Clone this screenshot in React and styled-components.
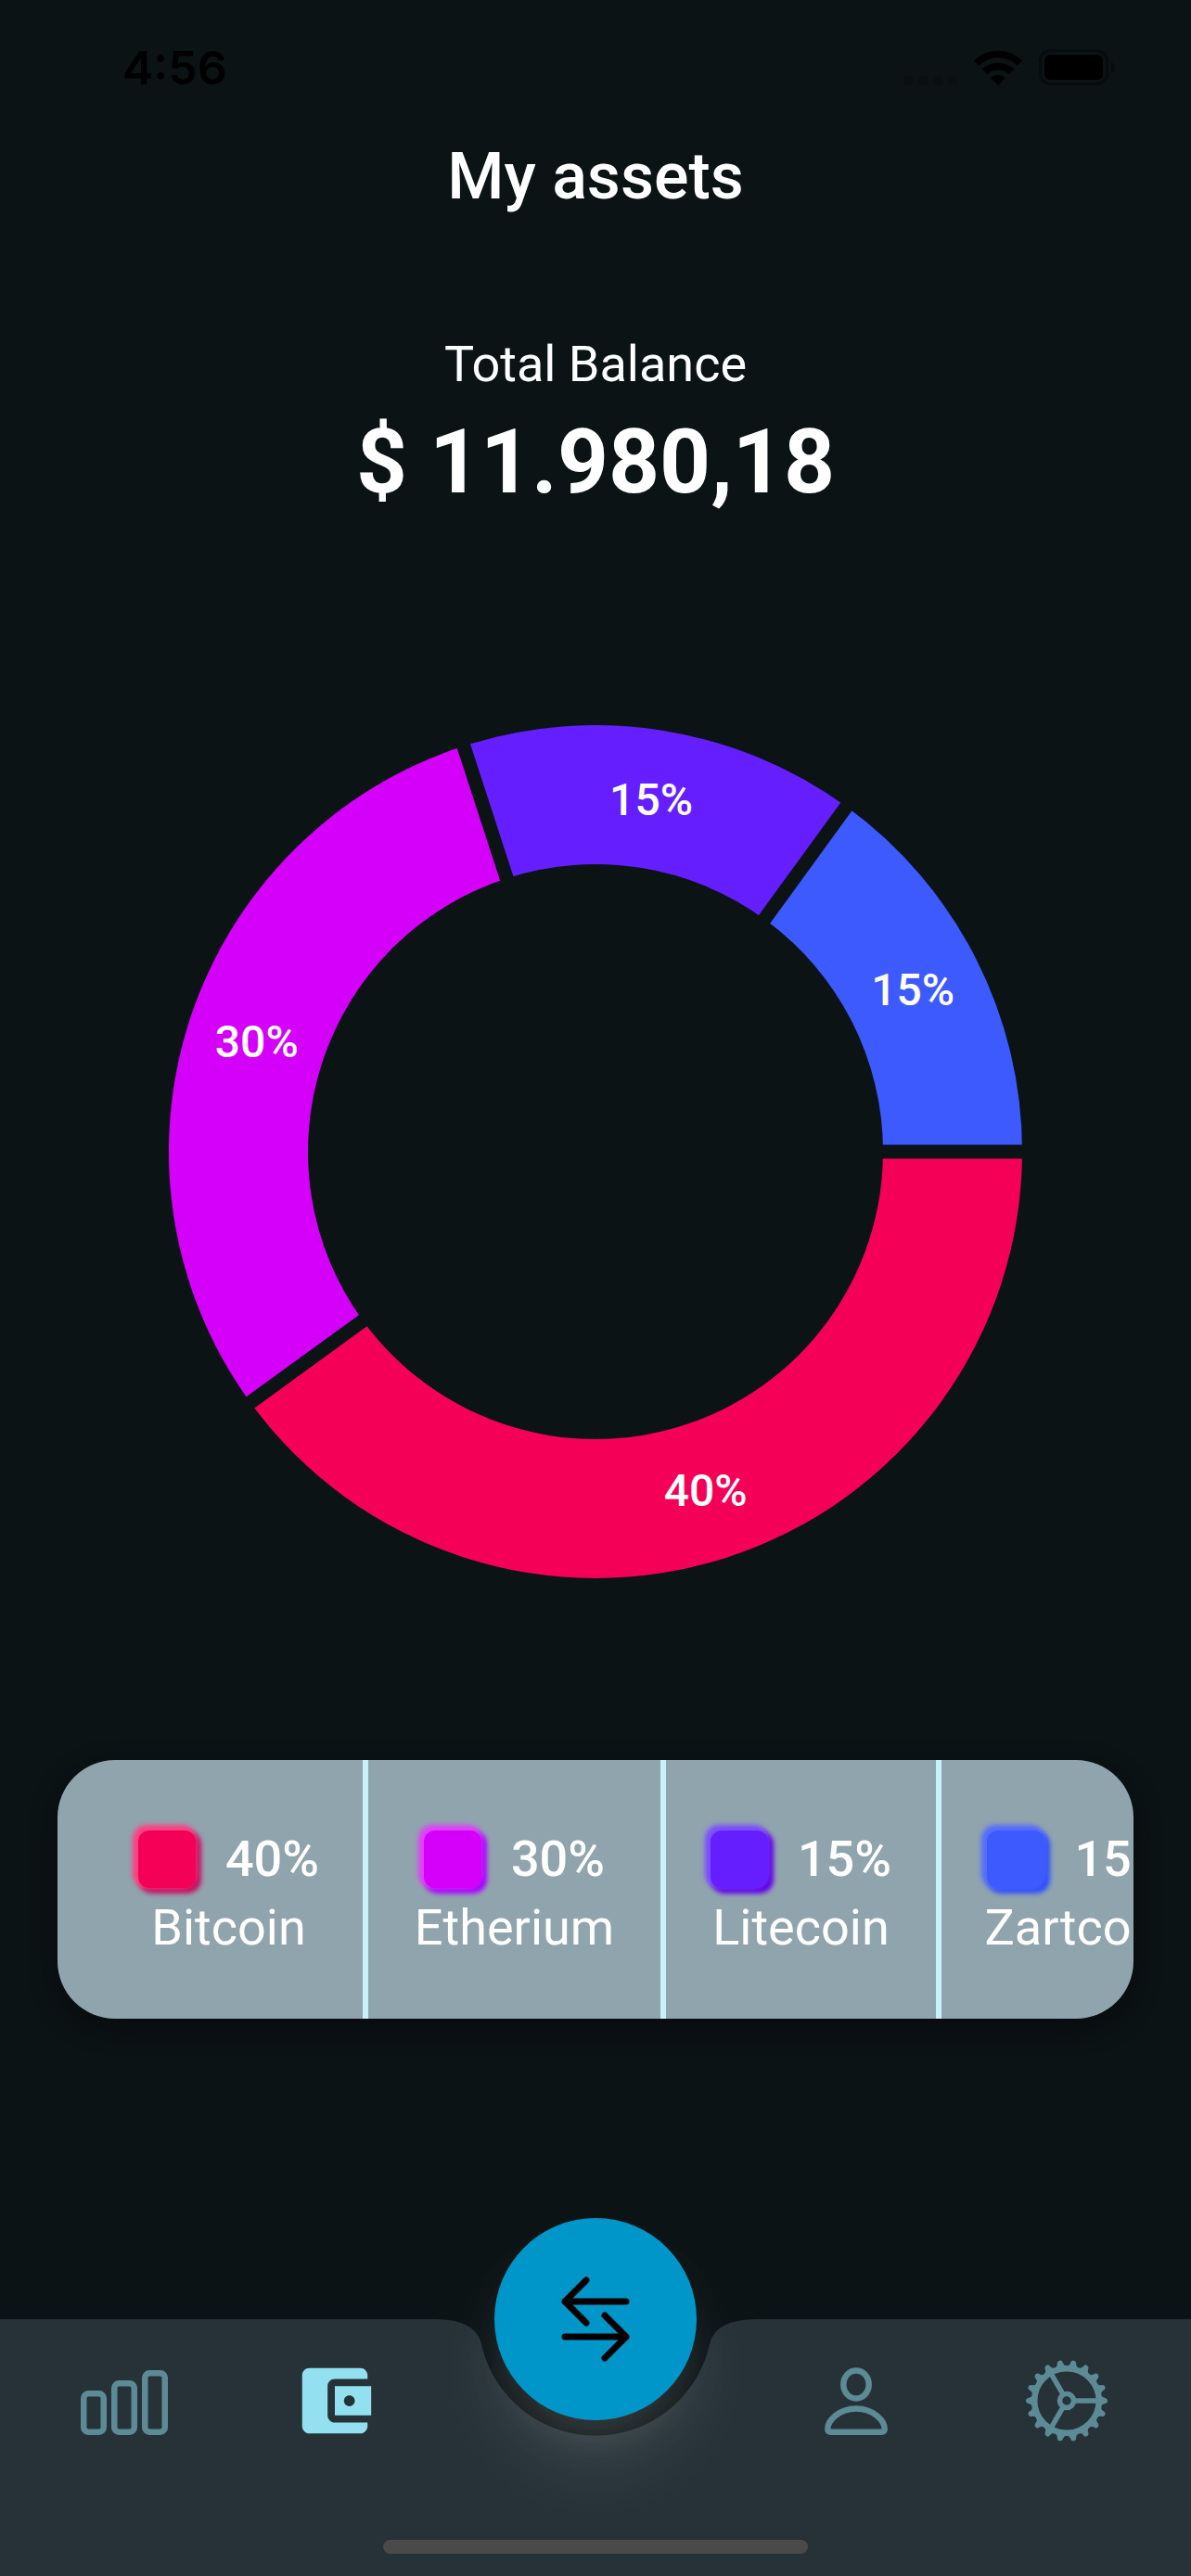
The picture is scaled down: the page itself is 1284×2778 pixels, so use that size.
import React from "react";
import styled, { createGlobalStyle } from "styled-components";

const BG = "#0b1315";

const GlobalStyle = createGlobalStyle`
  *, *::before, *::after { box-sizing: border-box; }
  html, body, #root { height: 100%; }
  body {
    margin: 0;
    background: ${BG};
    color: #fff;
    font-family: Roboto, "Liberation Sans", sans-serif;
  }
`;

const assets = [
  { name: "Bitcoin", percent: 40, color: "#f50057", light: "#ff4081", dark: "#c51162", width: 289 },
  { name: "Etherium", percent: 30, color: "#d500f9", light: "#e040fb", dark: "#aa00ff", width: 321 },
  { name: "Litecoin", percent: 15, color: "#651fff", light: "#7c4dff", dark: "#6200ea", width: 297 },
  { name: "Zartcoin", percent: 15, color: "#3d5afe", light: "#536dfe", dark: "#304ffe", width: 300 },
];

const Screen = styled.div`
  min-height: 100%;
  display: flex;
  flex-direction: column;
  background: ${BG};
`;

const StatusBar = styled.header`
  height: 146px;
  padding: 0 82px 0 132px;
  display: flex;
  align-items: center;
  justify-content: space-between;
  color: #000;
`;

const Clock = styled.time`
  font: 600 50px/60px Inter, Roboto, sans-serif;
`;

const StatusIcons = styled.div`
  display: flex;
  align-items: center;
  gap: 18px;
`;

const Main = styled.main`
  flex: 1;
  display: flex;
  flex-direction: column;
  align-items: center;
`;

const Title = styled.h1`
  margin: 0;
  font-size: 70px;
  line-height: 88px;
  font-weight: 500;
`;

const Balance = styled.section`
  margin-top: 124px;
  display: flex;
  flex-direction: column;
  align-items: center;
`;

const BalanceLabel = styled.p`
  margin: 0;
  font-size: 54px;
  line-height: 70px;
  font-weight: 400;
`;

const BalanceValue = styled.p`
  margin: 8px 0 0;
  font-size: 96px;
  line-height: 124px;
  font-weight: 700;
`;

const Chart = styled.svg`
  width: 72%;
  max-width: 920px;
  height: auto;
  margin-top: 222px;
  display: block;
`;

const ChartLabel = styled.text`
  fill: #fff;
  font-size: 48px;
  font-weight: 500;
  text-anchor: middle;
  dominant-baseline: central;
`;

const Legend = styled.ul`
  align-self: stretch;
  height: 279px;
  margin: 196px 62px 0;
  padding: 0 0 0 40px;
  display: flex;
  list-style: none;
  overflow: hidden;
  border-radius: 62px;
  background: #90a4ae;
  box-shadow: 0 9px 27px rgba(8, 8, 12, 0.7);
`;

const LegendItem = styled.li`
  flex: none;
  width: ${(p) => p.$width}px;
  padding-top: 8px;
  display: flex;
  flex-direction: column;
  align-items: center;
  justify-content: center;
  gap: 4px;

  & + & {
    border-left: 6px solid #c8f1f8;
  }
`;

const LegendValue = styled.div`
  display: flex;
  align-items: center;
  gap: 32px;
  font-size: 54px;
  line-height: 70px;
  font-weight: 500;
`;

const Swatch = styled.span`
  width: 62px;
  height: 62px;
  border-radius: 12px;
  background: ${(p) => p.$color};
  box-shadow: -3px -3px 5px 3px ${(p) => p.$light}, 3px 3px 5px 3px ${(p) => p.$dark};
`;

const LegendName = styled.span`
  font-size: 54px;
  line-height: 70px;
  font-weight: 400;
`;

const TabBar = styled.nav`
  position: relative;
  height: 277px;
  padding: 41px 87px 0;
  display: flex;
  align-items: flex-start;
  justify-content: space-between;
`;

const TabBackground = styled.div`
  position: absolute;
  inset: 0;
  display: grid;
  grid-template-columns: 1fr 348px 1fr;
`;

const TabFill = styled.div`
  background: #263238;
`;

const TabGroup = styled.div`
  position: relative;
  display: flex;
  gap: 133px;
`;

const TabButton = styled.button`
  width: 94px;
  height: 94px;
  padding: 0;
  border: 0;
  background: none;
  color: ${(p) => (p.$active ? "#93e1f0" : "#5d8b95")};

  svg { display: block; overflow: visible; }
`;

const SwapButton = styled.button`
  position: absolute;
  top: -109px;
  left: calc(50% - 109px);
  width: 218px;
  height: 218px;
  padding: 0;
  border: 0;
  border-radius: 50%;
  display: grid;
  place-items: center;
  background: #0096c9;
  color: #000;
  box-shadow: 0 33px 45px -21px rgba(255, 255, 255, 0.1),
    0 54px 84px 0 rgba(255, 255, 255, 0.08),
    0 27px 84px 0 rgba(255, 255, 255, 0.04);
`;

const HomeIndicator = styled.div`
  position: absolute;
  bottom: 24px;
  left: calc(50% - 229px);
  width: 458px;
  height: 15px;
  border-radius: 8px;
  background: #4a4a4a;
`;

const CENTER = 460;
const OUTER = 460;
const INNER = 310;
const LABEL_RADIUS = 384;

function polar(radius, fraction) {
  const angle = fraction * 2 * Math.PI;
  return [CENTER + radius * Math.cos(angle), CENTER + radius * Math.sin(angle)];
}

function ringSlice(start, end) {
  const large = end - start > 0.5 ? 1 : 0;
  const [x1, y1] = polar(OUTER, start);
  const [x2, y2] = polar(OUTER, end);
  const [x3, y3] = polar(INNER, end);
  const [x4, y4] = polar(INNER, start);
  return `M${x1} ${y1}A${OUTER} ${OUTER} 0 ${large} 1 ${x2} ${y2}L${x3} ${y3}A${INNER} ${INNER} 0 ${large} 0 ${x4} ${y4}Z`;
}

function AssetChart() {
  let total = 0;
  const slices = assets.map((asset) => {
    const start = total;
    total += asset.percent / 100;
    return { ...asset, start, end: total };
  });
  return (
    <Chart viewBox="0 0 920 920" role="img" aria-label="Asset distribution">
      {slices.map((s) => (
        <path key={s.name} d={ringSlice(s.start, s.end)} fill={s.color} />
      ))}
      {slices.map((s) => {
        const [x1, y1] = polar(INNER - 5, s.start);
        const [x2, y2] = polar(OUTER + 5, s.start);
        return <line key={s.name} x1={x1} y1={y1} x2={x2} y2={y2} stroke={BG} strokeWidth="15" />;
      })}
      {slices.map((s) => {
        const [x, y] = polar(LABEL_RADIUS, (s.start + s.end) / 2);
        return (
          <ChartLabel key={s.name} x={x} y={y}>
            {s.percent}%
          </ChartLabel>
        );
      })}
    </Chart>
  );
}

function SignalDots() {
  return (
    <svg width="58" height="38" viewBox="0 0 58 38" aria-hidden="true">
      {[0, 16, 32, 48].map((x) => (
        <rect key={x} x={x} y="28" width="10" height="10" rx="4" fill="#0a0f11" />
      ))}
    </svg>
  );
}

function WifiIcon() {
  return (
    <svg width="52" height="38" viewBox="0 0 52 38" aria-hidden="true">
      <path d="M0 11.500A36.500 36.500 0 0 1 52 11.500L46.500 16.500A29 29 0 0 0 5.500 16.500Z" />
      <path d="M9 20.500A24.500 24.500 0 0 1 43 20.500L37.500 26A17 17 0 0 0 14.500 26Z" />
      <path d="M18 30A12 12 0 0 1 34 30L26 38Z" />
    </svg>
  );
}

function BatteryIcon() {
  return (
    <svg width="82" height="40" viewBox="0 0 82 40" aria-hidden="true">
      <rect x="1.500" y="1.500" width="72" height="36" rx="11" fill="none" stroke="#070c0e" strokeWidth="3" />
      <rect x="6" y="6" width="63" height="27" rx="6" />
      <path d="M78 14v12c5-2 5-10 0-12Z" fill="#070c0e" />
    </svg>
  );
}

function BarsIcon() {
  return (
    <svg width="94" height="94" viewBox="0 0 94 94" fill="none" stroke="currentColor" strokeWidth="6.500" aria-hidden="true">
      <rect x="3.250" y="39.250" width="21.500" height="41.500" rx="5" />
      <rect x="36.250" y="28.250" width="21.500" height="52.500" rx="5" />
      <rect x="69.250" y="17.250" width="21.500" height="63.500" rx="5" />
    </svg>
  );
}

function WalletIcon() {
  return (
    <svg width="94" height="94" viewBox="0 0 24 24" fill="currentColor" aria-hidden="true">
      <path d="M21 18v1c0 1.100-.9 2-2 2H5c-1.110 0-2-.9-2-2V5c0-1.100.89-2 2-2h14c1.100 0 2 .9 2 2v1h-9c-1.110 0-2 .9-2 2v8c0 1.100.89 2 2 2h9zm-9-2h10V8H12v8zm4-2.500c-.83 0-1.500-.67-1.500-1.500s.67-1.500 1.500-1.500 1.500.67 1.500 1.500-.67 1.500-1.500 1.500z" />
    </svg>
  );
}

function PersonIcon() {
  return (
    <svg width="94" height="94" viewBox="0 0 94 94" fill="none" stroke="currentColor" strokeWidth="6.500" aria-hidden="true">
      <ellipse cx="47" cy="29.500" rx="13.700" ry="15" />
      <path d="M47 55.500C28 55.500 16.300 69 16.300 77.500C16.300 80 18 80.700 20 80.700H74C76 80.700 77.700 80 77.700 77.500C77.700 69 66 55.500 47 55.500Z" />
    </svg>
  );
}

function GearIcon() {
  const teeth = Array.from({ length: 18 }, (_, i) => i * 20);
  return (
    <svg width="94" height="94" viewBox="-47 -47 94 94" fill="none" stroke="currentColor" aria-hidden="true">
      <circle r="34.800" strokeWidth="6.500" />
      <circle r="7.500" strokeWidth="5.500" />
      {[0, 120, 240].map((a) => (
        <path key={a} d="M9 0H33" strokeWidth="5.500" transform={`rotate(${a})`} />
      ))}
      {teeth.map((a) => (
        <path
          key={a}
          d="M36.500 -6Q39 -3 42 -2.800Q44 -2.400 44 0Q44 2.400 42 2.800Q39 3 36.500 6Z"
          fill="currentColor"
          stroke="none"
          transform={`rotate(${a})`}
        />
      ))}
    </svg>
  );
}

function SwapIcon() {
  return (
    <svg width="74" height="92" viewBox="0 0 74 92" fill="none" stroke="currentColor" strokeWidth="7" strokeLinecap="round" strokeLinejoin="round" aria-hidden="true">
      <path d="M70 27H4M27 4L4 27L27 50" />
      <path d="M4 65H70M47 42L70 65L47 88" />
    </svg>
  );
}

export default function App() {
  return (
    <Screen>
      <GlobalStyle />
      <StatusBar>
        <Clock>4:56</Clock>
        <StatusIcons>
          <SignalDots />
          <WifiIcon />
          <BatteryIcon />
        </StatusIcons>
      </StatusBar>
      <Main>
        <Title>My assets</Title>
        <Balance>
          <BalanceLabel>Total Balance</BalanceLabel>
          <BalanceValue>$ 11.980,18</BalanceValue>
        </Balance>
        <AssetChart />
        <Legend>
          {assets.map((asset) => (
            <LegendItem key={asset.name} $width={asset.width}>
              <LegendValue>
                <Swatch $color={asset.color} $light={asset.light} $dark={asset.dark} />
                {asset.percent}%
              </LegendValue>
              <LegendName>{asset.name}</LegendName>
            </LegendItem>
          ))}
        </Legend>
      </Main>
      <TabBar>
        <TabBackground>
          <TabFill />
          <svg width="348" height="277" viewBox="0 0 348 277" fill="#263238" aria-hidden="true">
            <path d="M0 0Q45 0 51 27A126 126 0 0 0 297 27Q303 0 348 0V277H0Z" />
          </svg>
          <TabFill />
        </TabBackground>
        <SwapButton aria-label="Swap">
          <SwapIcon />
        </SwapButton>
        <TabGroup>
          <TabButton aria-label="Market">
            <BarsIcon />
          </TabButton>
          <TabButton aria-label="Wallet" $active>
            <WalletIcon />
          </TabButton>
        </TabGroup>
        <TabGroup>
          <TabButton aria-label="Profile">
            <PersonIcon />
          </TabButton>
          <TabButton aria-label="Settings">
            <GearIcon />
          </TabButton>
        </TabGroup>
        <HomeIndicator />
      </TabBar>
    </Screen>
  );
}
